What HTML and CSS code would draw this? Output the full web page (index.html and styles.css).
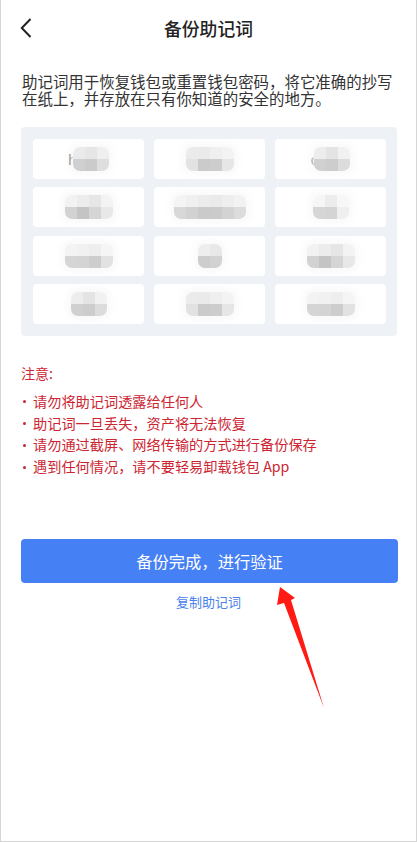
FILE: index.html
```html
<!DOCTYPE html>
<html lang="zh-CN">
<head>
<meta charset="utf-8">
<title>备份助记词</title>
<link rel="stylesheet" href="styles.css">
</head>
<body>
<div class="page">
  <header class="header">
    <svg class="back" width="12" height="20" viewBox="0 0 12 20"><path d="M10.5 1 L1.8 10 L10.5 19" fill="none" stroke="#222" stroke-width="2"/></svg>
    <h1 class="title">备份助记词</h1>
  </header>

  <p class="desc">助记词用于恢复钱包或重置钱包密码，将它准确的抄写在纸上，并存放在只有你知道的安全的地方。</p>

  <div class="panel">
    <div class="cell"><span class="frag">h</span><div class="mosaic m3 s1"><i></i><i></i><i></i><i></i><i></i><i></i></div></div>
    <div class="cell"><div class="mosaic m4 s2"><i></i><i></i><i></i><i></i><i></i><i></i><i></i><i></i></div></div>
    <div class="cell"><span class="frag">c</span><div class="mosaic m3 s3"><i></i><i></i><i></i><i></i><i></i><i></i></div></div>

    <div class="cell"><div class="mosaic m4 s4"><i></i><i></i><i></i><i></i><i></i><i></i><i></i><i></i></div></div>
    <div class="cell"><div class="mosaic m6 s2"><i></i><i></i><i></i><i></i><i></i><i></i><i></i><i></i><i></i><i></i><i></i><i></i></div></div>
    <div class="cell"><div class="mosaic m3 s5"><i></i><i></i><i></i><i></i><i></i><i></i></div></div>

    <div class="cell"><div class="mosaic m4 s6"><i></i><i></i><i></i><i></i><i></i><i></i><i></i><i></i></div></div>
    <div class="cell"><div class="mosaic m2 s1"><i></i><i></i><i></i><i></i></div></div>
    <div class="cell"><div class="mosaic m4 s4"><i></i><i></i><i></i><i></i><i></i><i></i><i></i><i></i></div></div>

    <div class="cell"><div class="mosaic m3 s3"><i></i><i></i><i></i><i></i><i></i><i></i></div></div>
    <div class="cell"><div class="mosaic m4 s2"><i></i><i></i><i></i><i></i><i></i><i></i><i></i><i></i></div></div>
    <div class="cell"><div class="mosaic m4 s6"><i></i><i></i><i></i><i></i><i></i><i></i><i></i><i></i></div></div>
  </div>

  <section class="notes">
    <div class="notes-title">注意:</div>
    <ul class="notes-list">
      <li>请勿将助记词透露给任何人</li>
      <li>助记词一旦丢失，资产将无法恢复</li>
      <li>请勿通过截屏、网络传输的方式进行备份保存</li>
      <li>遇到任何情况，请不要轻易卸载钱包 App</li>
    </ul>
  </section>

  <button class="primary">备份完成，进行验证</button>
  <div class="copy">复制助记词</div>

  <svg class="arrow" width="417" height="842" viewBox="0 0 417 842">
    <polygon points="280,587 295,598 291,600 324,708 284,603 277,605" fill="#ff1b14"/>
  </svg>
</div>
</body>
</html>
```

FILE: styles.css
```css
* { box-sizing: border-box; }
html, body { margin: 0; padding: 0; background: #fff; }
body {
  font-family: "Noto Sans CJK SC", "Noto Sans", "Liberation Sans", sans-serif;
}
.page {
  position: relative;
  width: 417px;
  height: 842px;
  border-left: 1px solid #d6d6d6;
  border-right: 1px solid #d6d6d6;
  border-bottom: 1px solid #d6d6d6;
  overflow: hidden;
}
.header {
  height: 56px;
  display: flex;
  align-items: center;
  justify-content: center;
  position: relative;
}
.back {
  position: absolute;
  left: 19px;
  top: 18px;
}
.title {
  margin: 0;
  font-size: 17.8px;
  font-weight: 500;
  color: #222;
  line-height: 24px;
}
.desc {
  margin: 17px 0 0;
  padding: 0 20px 0 21px;
  font-size: 15.45px;
  line-height: 17px;
  color: #333;
}
.panel {
  margin: 20px 19px 0 20px;
  padding: 12px;
  background: #eef2f7;
  border-radius: 4px;
  display: grid;
  grid-template-columns: repeat(3, 111px);
  grid-auto-rows: 40px;
  column-gap: 10px;
  row-gap: 8.33px;
}
.cell {
  background: #fff;
  border-radius: 4px;
  display: flex;
  align-items: center;
  justify-content: center;
  position: relative;
}
.frag {
  font-family: "Liberation Sans", sans-serif;
  font-size: 15px;
  color: #222;
  margin-right: -4px;
  line-height: 1;
}
.mosaic {
  display: grid;
  grid-auto-rows: 12px;
  border-radius: 7px;
  overflow: hidden;
  box-shadow: 0 0 6px 4px rgba(248, 248, 248, 0.9);
}
.mosaic i { display: block; width: 12px; height: 12px; background: #e4e4e4; }
.m2 { grid-template-columns: repeat(2, 12px); }
.m3 { grid-template-columns: repeat(3, 12px); }
.m4 { grid-template-columns: repeat(4, 12px); }
.m6 { grid-template-columns: repeat(6, 12px); }

.mosaic i:nth-child(odd) { background: #ededed; }
.s1 i:nth-child(1) { background: #ebebeb; } .s1 i:nth-child(2) { background: #e6e6e6; } .s1 i:nth-child(3) { background: #efefef; }
.s1 i:nth-child(4) { background: #d0d0d0; } .s1 i:nth-child(5) { background: #cbcbcb; } .s1 i:nth-child(6) { background: #dedede; }
.m2.s1 i:nth-child(1) { background: #eeeeee; } .m2.s1 i:nth-child(2) { background: #e8e8e8; }
.m2.s1 i:nth-child(3) { background: #cdcdcd; } .m2.s1 i:nth-child(4) { background: #d2d2d2; }

.s2 i:nth-child(-n+6) { background: #efefef; }
.m4.s2 i:nth-child(1) { background: #ebebeb; } .m4.s2 i:nth-child(2) { background: #eaeaea; } .m4.s2 i:nth-child(3) { background: #efefef; } .m4.s2 i:nth-child(4) { background: #f3f3f3; }
.m4.s2 i:nth-child(5) { background: #e2e2e2; } .m4.s2 i:nth-child(6) { background: #cbcbcb; } .m4.s2 i:nth-child(7) { background: #cdcdcd; } .m4.s2 i:nth-child(8) { background: #e6e6e6; }
.m6.s2 i:nth-child(1) { background: #f4f4f4; } .m6.s2 i:nth-child(2) { background: #f0f0f0; } .m6.s2 i:nth-child(3) { background: #ececec; }
.m6.s2 i:nth-child(4) { background: #eaeaea; } .m6.s2 i:nth-child(5) { background: #eeeeee; } .m6.s2 i:nth-child(6) { background: #f2f2f2; }
.m6.s2 i:nth-child(7) { background: #d8d8d8; } .m6.s2 i:nth-child(8) { background: #d2d2d2; } .m6.s2 i:nth-child(9) { background: #cacaca; }
.m6.s2 i:nth-child(10) { background: #cbcbcb; } .m6.s2 i:nth-child(11) { background: #d3d3d3; } .m6.s2 i:nth-child(12) { background: #dcdcdc; }

.s3 i:nth-child(1) { background: #ededed; } .s3 i:nth-child(2) { background: #e4e4e4; } .s3 i:nth-child(3) { background: #f1f1f1; }
.s3 i:nth-child(4) { background: #d0d0d0; } .s3 i:nth-child(5) { background: #cdcdcd; } .s3 i:nth-child(6) { background: #dcdcdc; }

.s4 i:nth-child(1) { background: #f2f2f2; } .s4 i:nth-child(2) { background: #ececec; } .s4 i:nth-child(3) { background: #e6e6e6; } .s4 i:nth-child(4) { background: #f3f3f3; }
.s4 i:nth-child(5) { background: #d2d2d2; } .s4 i:nth-child(6) { background: #c4c4c4; } .s4 i:nth-child(7) { background: #d5d5d5; } .s4 i:nth-child(8) { background: #e8e8e8; }

.s5 i:nth-child(1) { background: #f6f6f6; } .s5 i:nth-child(2) { background: #ececec; } .s5 i:nth-child(3) { background: #f7f7f7; }
.s5 i:nth-child(4) { background: #d6d6d6; } .s5 i:nth-child(5) { background: #d4d4d4; } .s5 i:nth-child(6) { background: #efefef; }

.s6 i:nth-child(1) { background: #f3f3f3; } .s6 i:nth-child(2) { background: #f1f1f1; } .s6 i:nth-child(3) { background: #eeeeee; } .s6 i:nth-child(4) { background: #f5f5f5; }
.s6 i:nth-child(5) { background: #d5d5d5; } .s6 i:nth-child(6) { background: #d4d4d4; } .s6 i:nth-child(7) { background: #cdcdcd; } .s6 i:nth-child(8) { background: #e2e2e2; }

.notes {
  margin: 27px 0 0;
  padding: 0 21px 0 20px;
  color: #cc2633;
}
.notes-title {
  font-size: 14px;
  line-height: 20px;
}
.notes-list {
  list-style: none;
  margin: 8px 0 0;
  padding: 0;
}
.notes-list li {
  position: relative;
  padding-left: 12px;
  font-size: 14.2px;
  line-height: 21.67px;
}
.notes-list li::before {
  content: "";
  position: absolute;
  left: 2px;
  top: 9.5px;
  width: 3px;
  height: 3px;
  border-radius: 50%;
  background: #cc2633;
}
.primary {
  display: block;
  margin: 61px 19px 0 20px;
  width: 377px;
  height: 44px;
  border: 0;
  border-radius: 4px;
  background: #4680f5;
  color: #fff;
  font-family: "Noto Sans CJK SC", "Noto Sans", sans-serif;
  font-size: 16.3px;
  line-height: 44px;
  padding: 0;
}
.copy {
  margin-top: 10px;
  text-align: center;
  font-size: 13px;
  line-height: 18px;
  color: #4a7fec;
}
.arrow {
  position: absolute;
  left: -1px;
  top: 0;
  pointer-events: none;
}
```
